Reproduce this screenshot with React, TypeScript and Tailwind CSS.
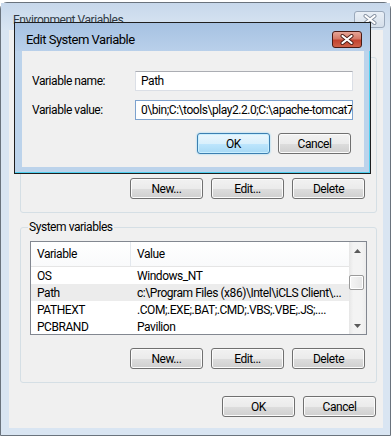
import React from 'react'

type BtnProps = { children: React.ReactNode; focus?: boolean }

function Button({ children, focus }: BtnProps) {
  if (focus) {
    return (
      <div className="flex h-[21px] w-[73px] items-center justify-center rounded-[3px] border border-[#3c7fb1] bg-[linear-gradient(to_bottom,#eaf6fd_0%,#d9f0fc_50%,#bee6fd_51%,#a7d9f5_100%)] shadow-[inset_0_0_0_1px_#c9efff,0_0_2px_#7fd0f5]">
        {children}
      </div>
    )
  }
  return (
    <div className="flex h-[21px] w-[73px] items-center justify-center rounded-[3px] border border-[#707070] bg-[linear-gradient(to_bottom,#f2f2f2_0%,#ebebeb_50%,#dddddd_51%,#cfcfcf_100%)] shadow-[inset_0_0_0_1px_#fbfbfb]">
      {children}
    </div>
  )
}

function CloseGlyph({ outline }: { outline: string }) {
  return (
    <svg width="14" height="11" viewBox="0 0 14 11">
      <path d="M2.5 2 L11.5 9 M11.5 2 L2.5 9" stroke={outline} strokeWidth="4" strokeLinecap="round" />
      <path d="M2.5 2 L11.5 9 M11.5 2 L2.5 9" stroke="#ffffff" strokeWidth="2.2" strokeLinecap="round" />
    </svg>
  )
}

function Arrow({ up }: { up?: boolean }) {
  return (
    <svg width="7" height="4" viewBox="0 0 7 4">
      <path d={up ? 'M0 4 L3.5 0 L7 4 Z' : 'M0 0 L3.5 4 L7 0 Z'} fill="#5a5a5a" />
    </svg>
  )
}

const rows = [
  { name: 'OS', value: 'Windows_NT' },
  { name: 'Path', value: 'c:\\Program Files (x86)\\Intel\\iCLS Client\\...', selected: true },
  { name: 'PATHEXT', value: '.COM;.EXE;.BAT;.CMD;.VBS;.VBE;.JS;....' },
  { name: 'PCBRAND', value: 'Pavilion' },
]

function GroupBox({ label, children }: { label: string; children: React.ReactNode }) {
  return (
    <div className="relative h-[156px] w-[357px] rounded-[3px] border border-[#d5dfe5] px-[9px] pt-[13px]">
      <span className="absolute -top-[8px] left-[7px] bg-[#f0f0f0] px-[1px] leading-[15px]">{label}</span>
      {children}
      <div className="mt-[13px] flex justify-end gap-[8px] pr-[2px]">
        <Button>New...</Button>
        <Button>Edit...</Button>
        <Button>Delete</Button>
      </div>
    </div>
  )
}

function SystemList() {
  return (
    <div className="flex h-[94px] w-[337px] overflow-hidden border border-[#828790] bg-white">
      <div className="min-w-0 flex-1">
        <div className="flex h-[25px] border-b border-[#e5e5e5] bg-[linear-gradient(to_bottom,#ffffff,#f9fafb)]">
          <div className="flex w-[100px] items-center border-r border-[#e3e8ee] pl-[6px]">Variable</div>
          <div className="flex items-center pl-[6px]">Value</div>
        </div>
        {rows.map((r) => (
          <div key={r.name} className={r.selected ? 'flex h-[17px] items-center bg-[#ececec]' : 'flex h-[17px] items-center'}>
            <div className="w-[100px] pl-[6px]">{r.name}</div>
            <div className="min-w-0 flex-1 overflow-hidden whitespace-nowrap pl-[6px]">{r.value}</div>
          </div>
        ))}
      </div>
      <div className="flex w-[17px] flex-col bg-[linear-gradient(to_right,#e6e6e6,#f3f3f3_25%,#f3f3f3_75%,#ececec)]">
        <div className="flex h-[17px] items-center justify-center">
          <Arrow up />
        </div>
        <div className="mt-[16px] mr-[2px] h-[15px] rounded-[2px] border border-[#9a9a9a] bg-[linear-gradient(to_right,#f5f5f5,#e6e6e6)] shadow-[inset_0_0_0_1px_#ffffff]" />
        <div className="flex-1" />
        <div className="flex h-[17px] items-center justify-center">
          <Arrow />
        </div>
      </div>
    </div>
  )
}

function EditDialog() {
  return (
    <div className="absolute left-[14px] top-[22px] flex h-[152px] w-[357px] flex-col border border-[#1e1e1e] bg-[#bcd3eb] shadow-[inset_-1px_-1px_0_#4fd0f0]">
      <div className="flex h-[28px] items-start bg-[linear-gradient(to_bottom,#a6c2e2,#b9d0ea)] pl-[11px]">
        <span className="mt-[9px] text-[13px] leading-[16px] tracking-[-0.5px]">Edit System Variable</span>
        <div className="ml-auto mr-[8px] mt-[8px] flex h-[17px] w-[30px] items-center justify-center rounded-[3px] border border-[#4a1a14] bg-[linear-gradient(to_bottom,#e6a597_0%,#d57a68_45%,#c2422e_55%,#cf6249_100%)]">
          <CloseGlyph outline="#4b1d17" />
        </div>
      </div>
      <div className="ml-[7px] h-[116px] w-[342px] bg-[#f0f0f0] pt-[20px]">
        <div className="flex h-[20px] items-center">
          <span className="w-[113px] pl-[10px]">Variable name:</span>
          <div className="flex h-[20px] w-[218px] items-center border border-[#dbdfe6] border-t-[#abadb3] bg-white px-[5px]">Path</div>
        </div>
        <div className="mt-[9px] flex h-[20px] items-center">
          <span className="w-[113px] pl-[10px]">Variable value:</span>
          <div className="flex h-[20px] w-[218px] items-center overflow-hidden whitespace-nowrap border border-[#7da2ce] bg-white px-[5px]">
            {'0\\bin;C:\\tools\\play2.2.0;C:\\apache-tomcat7'}
          </div>
        </div>
        <div className="mt-[13px] flex justify-end gap-[8px] pr-[13px]">
          <Button focus>OK</Button>
          <Button>Cancel</Button>
        </div>
      </div>
    </div>
  )
}

export default function App() {
  return (
    <div className="relative h-[437px] w-[392px] overflow-hidden bg-white pt-[2px] font-[Roboto,sans-serif] text-[12px] tracking-[-0.45px] text-black">
      <div className="flex h-[434px] w-[391px] flex-col rounded-t-[7px] border border-[#6a737d] bg-[#d9e5f2]">
        <div className="flex h-[27px] items-start bg-[linear-gradient(to_bottom,#c7d8eb,#d9e5f2)] pl-[12px]">
          <span className="mt-[9px] leading-[16px] text-[#2f3a46]">Environment Variables</span>
          <div className="ml-auto mr-[5px] mt-[8px] flex h-[17px] w-[31px] items-center justify-center rounded-[3px] border border-[#9aa8ba] bg-[linear-gradient(to_bottom,#e9eff6,#d5dfea)]">
            <CloseGlyph outline="#8590a0" />
          </div>
        </div>
        <div className="ml-[8px] flex h-[398px] w-[374px] flex-col bg-[#f0f0f0] pl-[11px] pt-[27px]">
          <GroupBox label="User variables for HP">
            <div className="h-[94px] w-[337px] border border-[#828790] bg-white" />
          </GroupBox>
          <div className="mt-[14px]">
            <GroupBox label="System variables">
              <SystemList />
            </GroupBox>
          </div>
          <div className="mt-[13px] flex w-[357px] justify-end gap-[8px] pr-[1px]">
            <Button>OK</Button>
            <Button>Cancel</Button>
          </div>
        </div>
      </div>
      <EditDialog />
    </div>
  )
}
